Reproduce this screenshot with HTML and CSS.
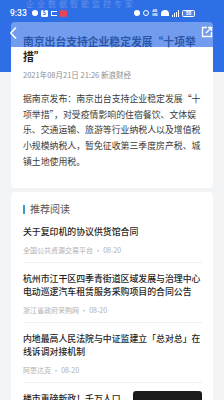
FILE: index.html
```html
<!DOCTYPE html>
<html lang="zh-CN">
<head>
<meta charset="utf-8">
<link rel="stylesheet" href="styles.css">
</head>
<body>
<div class="ghost">企业数据智能监控专家</div>
<div class="status">
  <span class="time">9:33</span>
  <span class="si si-circle"></span>
  <span class="si si-box">S</span>
  <span class="si si-p"></span>
  <span class="si si-red"></span>
  <span class="spacer"></span>
  <span class="si si-dot"></span>
  <span class="si si-ring"></span>
  <span class="si si-lte">4G<br>HD</span>
  <span class="si si-wifi"></span>
  <span class="si si-sig"><i></i><i></i><i></i><i></i></span>
  <span class="si si-bat">58</span>
</div>
<div class="header">
  <svg class="back" width="8" height="12" viewBox="0 0 8 12"><path d="M6.5 1 L1.8 6 L6.5 11" fill="none" stroke="#fff" stroke-width="1.6" stroke-linecap="round" stroke-linejoin="round"/></svg>
  <svg class="share" width="12" height="12" viewBox="0 0 12 12"><path d="M6 1.5 H1.5 V10.5 H10.5 V6" fill="none" stroke="#fff" stroke-width="1.3"/><path d="M5 7 L10.5 1.5 M7 1.5 H10.5 V5" fill="none" stroke="#fff" stroke-width="1.3"/></svg>
</div>
<main class="page">
  <article class="card article">
    <h1 class="title">南京出台支持企业稳定发展“十项举措”</h1>
    <div class="meta">2021年08月21日 21:26 新浪财经</div>
    <p class="body">据南京发布：南京出台支持企业稳定发展“十项举措”，对受疫情影响的住宿餐饮、文体娱乐、交通运输、旅游等行业纳税人以及增值税小规模纳税人，暂免征收第三季度房产税、城镇土地使用税。</p>
  </article>
  <section class="card rec">
    <h2 class="rec-head">推荐阅读</h2>
    <div class="item">
      <div class="item-title">关于复印机的协议供货馆合同</div>
      <div class="item-src">全国公共资源交易平台 · 08-20</div>
    </div>
    <div class="item">
      <div class="item-title">杭州市江干区四季青街道区域发展与治理中心电动巡逻汽车租赁服务采购项目的合同公告</div>
      <div class="item-src">浙江省政府采购网 · 08-20</div>
    </div>
    <div class="item">
      <div class="item-title">内地最高人民法院与中证监建立「总对总」在线诉调对接机制</div>
      <div class="item-src">阿思达克 · 08-20</div>
    </div>
    <div class="item item-thumb">
      <div class="item-title">楼市重磅新政！千万人口城市落户放开</div>
      <div class="thumb"></div>
    </div>
  </section>
</main>
</body>
</html>
```

FILE: styles.css
```css
* { box-sizing: border-box; margin: 0; padding: 0; }
html, body { width: 224px; height: 400px; overflow: hidden; }
body {
  font-family: "Noto Sans CJK SC", "Noto Sans", sans-serif;
  background: linear-gradient(#2f6fe6 0, #2f6fe6 72px, #f3f4f6 72px);
  position: relative;
}
.ghost {
  height: 6px;
  line-height: 8px;
  font-size: 8px;
  letter-spacing: 3px;
  color: rgba(255,255,255,0.25);
  padding-left: 26px;
  white-space: nowrap;
}
.status {
  height: 16px;
  padding: 0 29px 2px 10px;
  display: flex;
  align-items: center;
  gap: 3px;
  color: #fff;
}
.time { font-family: "Roboto", sans-serif; font-size: 8.5px; font-weight: 500; margin-right: 2px; }
.si { display: inline-block; flex: none; }
.si-circle { width: 6px; height: 6px; border-radius: 50%; background: #fff; }
.si-box { width: 7px; height: 7px; border-radius: 1.5px; background: #fff; color: #2f6fe6; font-size: 5.5px; line-height: 7px; text-align: center; font-weight: 700; }
.si-p { width: 6px; height: 5px; border-top: 1.5px solid #fff; border-bottom: 1px solid #fff; border-left: 1px solid #fff; }
.si-red { width: 7px; height: 7px; border-radius: 1.5px; background: #e8445a; }
.spacer { flex: 1; }
.si-dot { width: 6px; height: 6px; border-radius: 50%; background: #fff; }
.si-ring { width: 6px; height: 6px; border-radius: 50%; border: 1.2px solid #fff; }
.si-lte { font-size: 4px; line-height: 4px; font-family: "Roboto", sans-serif; font-weight: 700; }
.si-wifi { width: 8px; height: 6px; border-radius: 8px 8px 0 0; background: #fff; }
.si-sig { display: flex; align-items: flex-end; gap: 0.6px; height: 7px; }
.si-sig i { display: block; width: 1.4px; background: #fff; }
.si-sig i:nth-child(1) { height: 2px; }
.si-sig i:nth-child(2) { height: 3.5px; }
.si-sig i:nth-child(3) { height: 5px; }
.si-sig i:nth-child(4) { height: 7px; }
.si-bat { width: 13px; height: 7px; border: 1px solid #fff; border-radius: 1.5px; font-size: 5px; line-height: 5px; text-align: center; font-family: "Roboto", sans-serif; font-weight: 700; background: rgba(255,255,255,0.15); }

.header {
  position: absolute;
  top: 22px; left: 0; right: 0;
  height: 25px;
  background: rgba(47,111,230,0.68);
  z-index: 5;
}
.back { position: absolute; left: 9px; top: 5px; }
.share { position: absolute; right: 11px; top: 4px; }

.page { padding: 0 11px; display: flex; flex-direction: column; gap: 4px; }
.card { background: #fff; border-radius: 4px; padding: 0 11px 0 12px; }

.article { padding-top: 12px; padding-bottom: 18.5px; }
.title { font-size: 10.8px; line-height: 15px; font-weight: 700; color: #1f1f1f; }
.meta { margin-top: 6px; font-size: 7.5px; line-height: 10px; color: #8e8e8e; white-space: nowrap; }
.body { margin-top: 11px; font-size: 8.9px; line-height: 15.7px; color: #3a3a3a; }

.rec { padding-top: 10px; }
.rec-head {
  font-size: 10px; line-height: 14px; font-weight: 400; color: #555;
  display: flex; align-items: center; gap: 5px;
}
.rec-head::before { content: ""; display: block; width: 2px; height: 9px; background: #3a9ad6; }
.item { padding: 9px 0 6.5px; border-bottom: 1px solid #efefef; }
.item-title { font-size: 8.9px; line-height: 13.5px; color: #1f1f1f; font-weight: 500; }
.item-src { margin-top: 6.5px; font-size: 7px; line-height: 10px; color: #b0b0b0; }
.item-thumb { display: flex; align-items: flex-start; gap: 10px; padding-top: 9px; }
.item-thumb .item-title { width: 100px; }
.thumb { width: 69px; height: 48px; border-radius: 3px; background: #1b1b1b; margin-top: -1px; flex: none; }
```
